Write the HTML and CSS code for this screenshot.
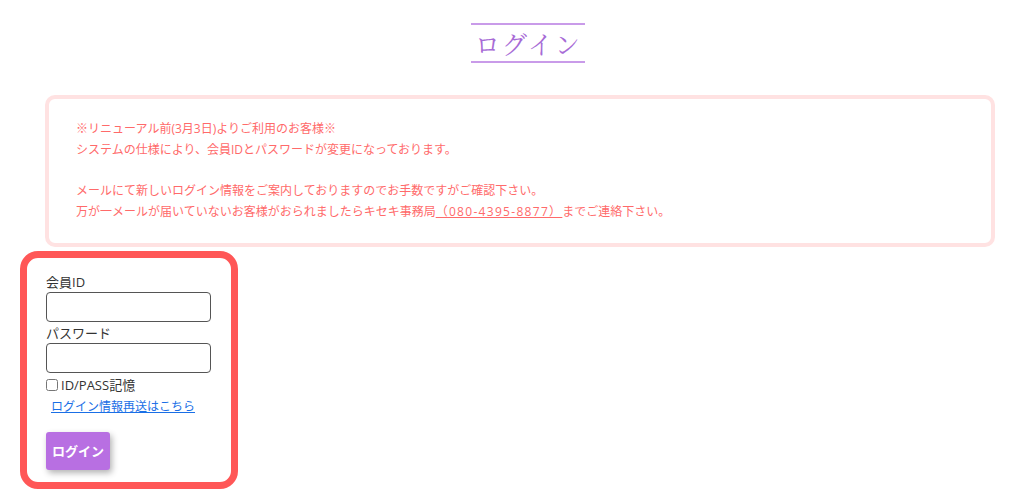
FILE: index.html
```html
<!DOCTYPE html>
<html lang="ja">
<head>
<meta charset="utf-8">
<title>ログイン</title>
<link rel="stylesheet" href="styles.css">
</head>
<body>
<div class="page">
  <div class="title-wrap">
    <h1 class="title">ログイン</h1>
  </div>
  <div class="notice">
    <p>※リニューアル前(3月3日)よりご利用のお客様※<br>システムの仕様により、会員IDとパスワードが変更になっております。</p>
    <p>メールにて新しいログイン情報をご案内しておりますのでお手数ですがご確認下さい。<br>万が一メールが届いていないお客様がおられましたらキセキ事務局<a class="tel" href="#">（080-4395-8877）</a>までご連絡下さい。</p>
  </div>
  <form class="login">
    <label class="label" for="uid">会員ID</label>
    <input class="field" id="uid" type="text">
    <label class="label" for="pw">パスワード</label>
    <input class="field" id="pw" type="password">
    <label class="remember"><input type="checkbox" class="check"> ID/PASS記憶</label>
    <a class="resend" href="#">ログイン情報再送はこちら</a>
    <button class="btn" type="button">ログイン</button>
  </form>
</div>
</body>
</html>
```

FILE: styles.css
```css
* { box-sizing: border-box; }
html, body { margin: 0; padding: 0; background: #fff; }
body {
  font-family: "Open Sans", "Noto Sans CJK JP", sans-serif;
  color: #333;
}
.page { width: 1024px; padding-top: 23px; }
.title-wrap { display: flex; justify-content: center; padding-left: 31px; }
.title {
  margin: 0;
  width: 114px;
  text-align: center;
  font-family: "Noto Serif CJK JP", "Liberation Serif", "Noto Sans CJK JP", serif;
  font-weight: 400;
  font-size: 25px;
  line-height: 34px;
  letter-spacing: 2px;
  color: #a76bd6;
  border-top: 2px solid #c99be9;
  border-bottom: 2px solid #c99be9;
  padding: 1px 0 1px 2px;
}
.notice {
  margin: 32px 29px 0 45px;
  border: 4px solid #ffe2e2;
  border-radius: 10px;
  padding: 20px 27px 20px;
  font-size: 12px;
  line-height: 20.7px;
  color: #ff6a6a;
}
.notice p { margin: 0; }
.notice p + p { margin-top: 20.7px; }
.tel {
  color: #ff6a6a;
  text-decoration: underline;
  letter-spacing: 1.3px;
}
.login {
  margin: 4px 0 0 20px;
  width: 218px;
  height: 238px;
  border: 7px solid #ff5757;
  border-radius: 18px;
  padding: 15px 19px 0;
  display: flex;
  flex-direction: column;
  align-items: flex-start;
}
.label { font-size: 13px; line-height: 18px; color: #333; }
.field {
  width: 165px;
  height: 30px;
  margin: 1px 0 2px;
  border: 1.5px solid #555;
  border-radius: 4px;
  background: #fff;
}
.remember {
  display: flex;
  align-items: center;
  gap: 3px;
  font-size: 13px;
  line-height: 20px;
  color: #333;
}
.check { margin: 0; width: 12px; height: 12px; }
.resend {
  margin: 3px 0 0 5px;
  font-size: 12px;
  line-height: 18px;
  color: #1a6fe6;
  text-decoration: underline;
}
.btn {
  margin-top: 16px;
  width: 64px;
  height: 38px;
  border: none;
  border-radius: 3px;
  background: #b86fe2;
  color: #fff;
  font-family: "Noto Sans CJK JP", sans-serif;
  font-weight: 700;
  font-size: 13px;
  padding: 0;
  box-shadow: 2px 3px 6px rgba(0,0,0,0.3);
}
```
